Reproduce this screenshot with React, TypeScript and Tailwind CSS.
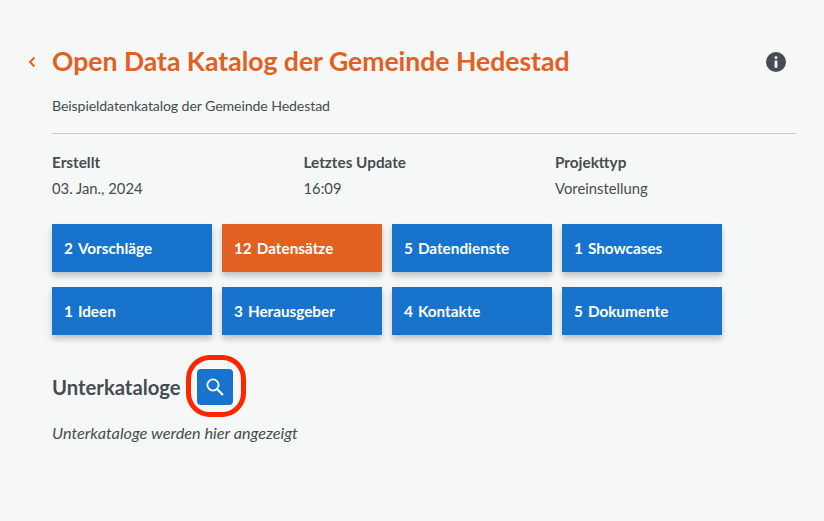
import React from 'react';

const stats = [
  { label: 'Erstellt', value: '03. Jan., 2024' },
  { label: 'Letztes Update', value: '16:09' },
  { label: 'Projekttyp', value: 'Voreinstellung' },
];

const tiles = [
  { count: '2', label: 'Vorschläge' },
  { count: '12', label: 'Datensätze', active: true },
  { count: '5', label: 'Datendienste' },
  { count: '1', label: 'Showcases' },
  { count: '1', label: 'Ideen' },
  { count: '3', label: 'Herausgeber' },
  { count: '4', label: 'Kontakte' },
  { count: '5', label: 'Dokumente' },
];

const App: React.FC = () => {
  return (
    <div className="min-h-[521px] w-full bg-[#f6f8f8] pl-[52px] pr-[28px] pt-[43px] font-['Lato','Noto_Sans',sans-serif] text-[#464c51]">
      {/* Header */}
      <div className="relative">
        <svg className="absolute left-[-25px] top-[12px]" width="10" height="14" viewBox="0 0 10 14" fill="none">
          <path d="M7.5 2.5 L3 7 L7.5 11.5" stroke="#e16022" strokeWidth="2" />
        </svg>
        <h1 className="text-[26.55px] leading-[36px] font-bold text-[#e16022]">
          Open Data Katalog der Gemeinde Hedestad
        </h1>
        <div className="absolute right-[10px] top-[9px] flex h-[20px] w-[20px] items-center justify-center rounded-full bg-[#464c51]">
          <svg width="4" height="12" viewBox="0 0 4 12" fill="#f6f8f8">
            <circle cx="2" cy="1.5" r="1.5" />
            <rect x="0.6" y="4.4" width="2.8" height="7.4" rx="0.3" />
          </svg>
        </div>
      </div>

      <p className="mt-[17px] text-[14.2px] leading-[20px] tracking-[-0.13px]">Beispieldatenkatalog der Gemeinde Hedestad</p>

      <hr className="mt-[17px] border-t border-[#c6c8c9]" />

      {/* Stats */}
      <div className="mt-[18px] flex">
        {stats.map((stat) => (
          <div key={stat.label} className="w-[251.5px] shrink-0">
            <div className="text-[15.3px] leading-[20px] font-bold">{stat.label}</div>
            <div className="mt-[6px] text-[14.8px] leading-[20px]">{stat.value}</div>
          </div>
        ))}
      </div>

      {/* Tiles */}
      <div className="mt-[26px] grid w-[670px] grid-cols-4 gap-x-[10px] gap-y-[15px]">
        {tiles.map((tile) => (
          <div
            key={tile.label}
            className={`flex h-[48px] w-[160px] items-center gap-[5px] px-[12px] pt-[1px] text-[15.3px] font-bold text-white shadow-[0_4px_6px_rgba(0,0,0,0.22)] ${
              tile.active ? 'bg-[#e16022]' : 'bg-[#1773cb]'
            }`}
          >
            <span>{tile.count}</span>
            <span>{tile.label}</span>
          </div>
        ))}
      </div>

      {/* Unterkataloge */}
      <div className="mt-[34px] flex items-center">
        <h2 className="w-[145px] text-[20.3px] leading-[36px] font-bold">Unterkataloge</h2>
        <div className="relative">
          <div className="flex h-[36px] w-[36px] items-center justify-center rounded-[4px] bg-[#1773cb] text-white">
            <svg width="20" height="20" viewBox="0 0 20 20" fill="none" stroke="currentColor" strokeWidth="1.8">
              <circle cx="8" cy="8" r="5.6" />
              <path d="M12 12 L18 18" strokeWidth="2.2" />
            </svg>
          </div>
          <div className="absolute left-[-11px] top-[-14px] h-[62px] w-[60px] rounded-[24px] border-[5px] border-[#fe2500]" />
        </div>
      </div>

      <p className="mt-[18px] text-[16.25px] leading-[20px] italic">Unterkataloge werden hier angezeigt</p>
    </div>
  );
};

export default App;
